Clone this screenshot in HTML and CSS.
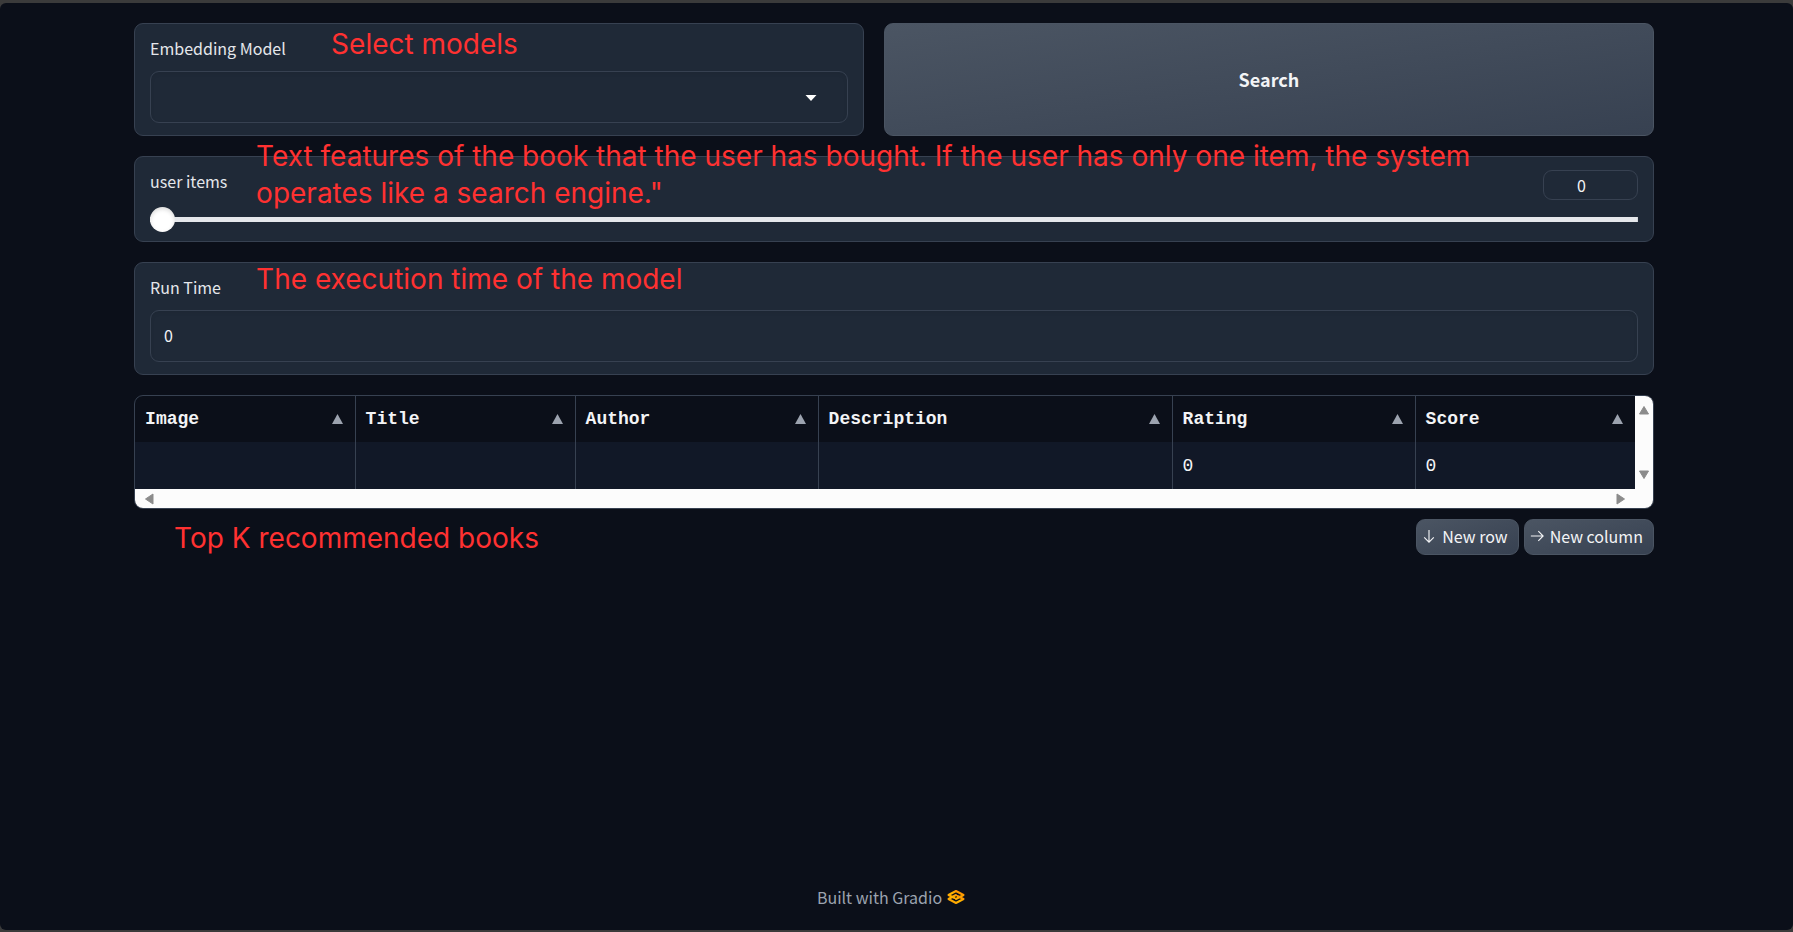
FILE: index.html
```html
<!DOCTYPE html>
<html lang="en">
<head>
<meta charset="utf-8">
<meta name="viewport" content="width=device-width, initial-scale=1">
<title>Book recommender</title>
<link rel="stylesheet" href="styles.css">
</head>
<body>
<div class="page">
  <main class="content">
    <div class="row">
      <section class="card card-model">
        <label class="label" for="model">Embedding Model</label>
        <div class="select-wrap">
          <select class="field" id="model"><option value=""></option></select>
          <svg class="caret" viewBox="0 0 18 18" aria-hidden="true"><path d="M3.5 6h11L9 12z"/></svg>
        </div>
        <p class="note note-model">Select models</p>
      </section>
      <button class="btn btn-search" type="button">Search</button>
    </div>

    <section class="card card-items">
      <div class="slider-head">
        <label class="label" for="items">user items</label>
        <input class="number" type="number" value="0" aria-label="user items value">
      </div>
      <input class="slider" id="items" type="range" min="0" max="10" value="0">
      <p class="note note-items">Text features of the book that the user has bought. If the user has only one item, the system<br>operates like a search engine."</p>
    </section>

    <section class="card">
      <label class="label" for="runtime">Run Time</label>
      <input class="field" id="runtime" type="text" value="0">
      <p class="note note-time">The execution time of the model</p>
    </section>

    <section class="results">
      <div class="table-frame">
        <table class="table">
          <colgroup><col class="c-s"><col class="c-s"><col class="c-m"><col class="c-l"><col class="c-m"><col class="c-s"></colgroup>
          <thead>
            <tr>
              <th><div class="th">Image<svg class="sort" viewBox="0 0 11 10"><path d="M5.5 0L11 10H0z"/></svg></div></th>
              <th><div class="th">Title<svg class="sort" viewBox="0 0 11 10"><path d="M5.5 0L11 10H0z"/></svg></div></th>
              <th><div class="th">Author<svg class="sort" viewBox="0 0 11 10"><path d="M5.5 0L11 10H0z"/></svg></div></th>
              <th><div class="th">Description<svg class="sort" viewBox="0 0 11 10"><path d="M5.5 0L11 10H0z"/></svg></div></th>
              <th><div class="th">Rating<svg class="sort" viewBox="0 0 11 10"><path d="M5.5 0L11 10H0z"/></svg></div></th>
              <th><div class="th">Score<svg class="sort" viewBox="0 0 11 10"><path d="M5.5 0L11 10H0z"/></svg></div></th>
            </tr>
          </thead>
          <tbody>
            <tr><td></td><td></td><td></td><td></td><td>0</td><td>0</td></tr>
          </tbody>
        </table>
        <div class="bar bar-v">
          <svg class="bar-arrow" viewBox="0 0 12 12"><path d="M6 2.5L10.5 10h-9z"/></svg>
          <svg class="bar-arrow" viewBox="0 0 12 12"><path d="M6 9.5L1.500 2h9z"/></svg>
        </div>
        <div class="bar bar-h">
          <svg class="bar-arrow" viewBox="0 0 12 12"><path d="M2.500 6L10 1v10z"/></svg>
          <svg class="bar-arrow" viewBox="0 0 12 12"><path d="M9.500 6L2 1v10z"/></svg>
        </div>
      </div>
      <div class="actions">
        <button class="btn btn-small" type="button"><svg class="arrow" viewBox="0 0 16 16"><path d="M8 1v14M2.500 9.500L8 15l5.500-5.500"/></svg>New row</button>
        <button class="btn btn-small" type="button"><svg class="arrow" viewBox="0 0 16 16"><path d="M1 8h14M9.500 2.500L15 8l-5.500 5.500"/></svg>New column</button>
      </div>
      <p class="note note-results">Top K recommended books</p>
    </section>
  </main>

  <footer class="footer">
    <a class="footer-link" href="#">Built with Gradio
      <svg class="logo" viewBox="0 0 18 16" aria-hidden="true">
        <defs><linearGradient id="g" x1="0" y1="1" x2="1" y2="0"><stop offset="0" stop-color="#ff9a00"/><stop offset="0.5" stop-color="#ffb800"/><stop offset="1" stop-color="#ff7c00"/></linearGradient></defs>
        <g fill="none" stroke="url(#g)" stroke-width="2" stroke-linejoin="round" stroke-linecap="round">
          <path d="M7.500 9L1.500 6 9 2l7.500 4L9 10"/>
          <path d="M10.500 7l6 3L9 14l-7.500-4L9 6"/>
        </g>
      </svg>
    </a>
  </footer>
</div>
</body>
</html>
```
FILE: styles.css
```css
* { box-sizing: border-box; }

body {
  margin: 0;
  background: #3b3b3b;
  color: #f3f4f6;
  font-family: "Noto Sans CJK SC", "Noto Sans", sans-serif;
  font-size: 16px;
  line-height: 24px;
}

p { margin: 0; }

button, input, select { font: inherit; color: inherit; }

.page {
  min-height: calc(100vh - 5px);
  margin: 3px 0 2px;
  padding: 20px 5px 21px 0;
  border-radius: 6px;
  background: #0b0f19;
  display: flex;
  flex-direction: column;
}

.content {
  width: 85%;
  margin: 0 auto;
  display: flex;
  flex-direction: column;
  gap: 20px;
}

.row {
  display: grid;
  grid-template-columns: 73fr 77fr;
  gap: 20px;
}

.card {
  position: relative;
  padding: 12px 15px;
  border: 1px solid #374151;
  border-radius: 9px;
  background: #1f2937;
}

.label {
  display: block;
  margin-bottom: 11px;
  color: #e5e7eb;
}

.field {
  display: block;
  width: 100%;
  height: 52px;
  padding: 0 13px 2px;
  border: 1px solid #374151;
  border-radius: 9px;
  background: #1f2937;
  box-shadow: inset 0 2px 4px rgba(0, 0, 0, 0.06);
  appearance: none;
}

.select-wrap { position: relative; }

.caret {
  position: absolute;
  right: 28px;
  top: 18px;
  width: 18px;
  height: 18px;
  fill: #fff;
}

.btn {
  padding-bottom: 2px;
  border: 1px solid #4b5563;
  border-radius: 9px;
  background: linear-gradient(to bottom right, #4b5563, #374151);
}

.btn-search {
  font-size: 18px;
  font-weight: 700;
}

.card-items { padding-bottom: 9px; }

.slider-head {
  display: flex;
  justify-content: space-between;
  align-items: flex-start;
  height: 38px;
}

.number {
  width: 95px;
  height: 30px;
  margin-top: 1px;
  padding: 0 18px 1px 0;
  border: 1px solid #374151;
  border-radius: 9px;
  background: #1f2937;
  text-align: center;
  appearance: textfield;
}

.number::-webkit-inner-spin-button { appearance: none; margin: 0; }

.slider {
  display: block;
  width: 100%;
  height: 25px;
  margin: 0;
  background: linear-gradient(#e5e7eb, #e5e7eb) center / 100% 5px no-repeat;
  border-radius: 3px;
  appearance: none;
}

.slider::-webkit-slider-thumb {
  width: 25px;
  height: 25px;
  border-radius: 50%;
  background: #fff;
  box-shadow: inset 0 2px 4px rgba(0, 0, 0, 0.15);
  appearance: none;
}

.note {
  position: absolute;
  color: #ff3131;
  font-family: Inter, sans-serif;
  font-size: 28px;
  font-weight: 400;
  line-height: 37px;
  white-space: nowrap;
  pointer-events: none;
}

.note-model { left: 196px; top: 2px; }
.note-items { left: 121px; top: -19px; }
.note-time { left: 121px; top: -2px; }
.note-results { left: 40px; bottom: -2px; }

.results { position: relative; }

.table-frame {
  display: grid;
  grid-template-columns: 1fr 20px;
  border: 1px solid #374151;
  border-radius: 9px;
  overflow: hidden;
}

.table {
  width: 100%;
  table-layout: fixed;
  border-collapse: collapse;
  font-family: "Liberation Mono", monospace;
  font-size: 18px;
}

.c-s { width: 220px; }
.c-m { width: 243px; }
.c-l { width: 354px; }

.table th, .table td {
  height: 46px;
  padding: 0 12px 0 10px;
  text-align: left;
}

.table td { height: 47px; background: #111827; }

.table th + th, .table td + td { border-left: 1px solid #374151; }

.th {
  display: flex;
  justify-content: space-between;
  align-items: center;
}

.sort {
  width: 11px;
  height: 10px;
  fill: #9ca3af;
}

.bar {
  display: flex;
  justify-content: space-between;
  align-items: center;
  background: #fcfcfc;
}

.bar-v { flex-direction: column; padding: 8px 2px 8px 0; }
.bar-h { grid-column: 1 / -1; height: 19px; padding: 0 28px 0 8px; }

.bar-arrow {
  width: 12px;
  height: 12px;
  fill: #8b8b8b;
  stroke: #8b8b8b;
  stroke-linejoin: round;
}

.actions {
  display: flex;
  justify-content: flex-end;
  gap: 5px;
  margin-top: 10px;
}

.btn-small {
  display: flex;
  align-items: center;
  gap: 6px;
  height: 36px;
  padding: 0 10px 2px 5px;
}

.arrow {
  width: 14px;
  height: 14px;
  fill: none;
  stroke: #f3f4f6;
  stroke-width: 1.3;
}

.footer {
  margin-top: auto;
  padding-right: 6px;
  display: flex;
  justify-content: center;
}

.footer-link {
  display: flex;
  align-items: center;
  gap: 5px;
  color: #9ca3af;
  text-decoration: none;
}

.logo {
  width: 18px;
  height: 16px;
}
```
